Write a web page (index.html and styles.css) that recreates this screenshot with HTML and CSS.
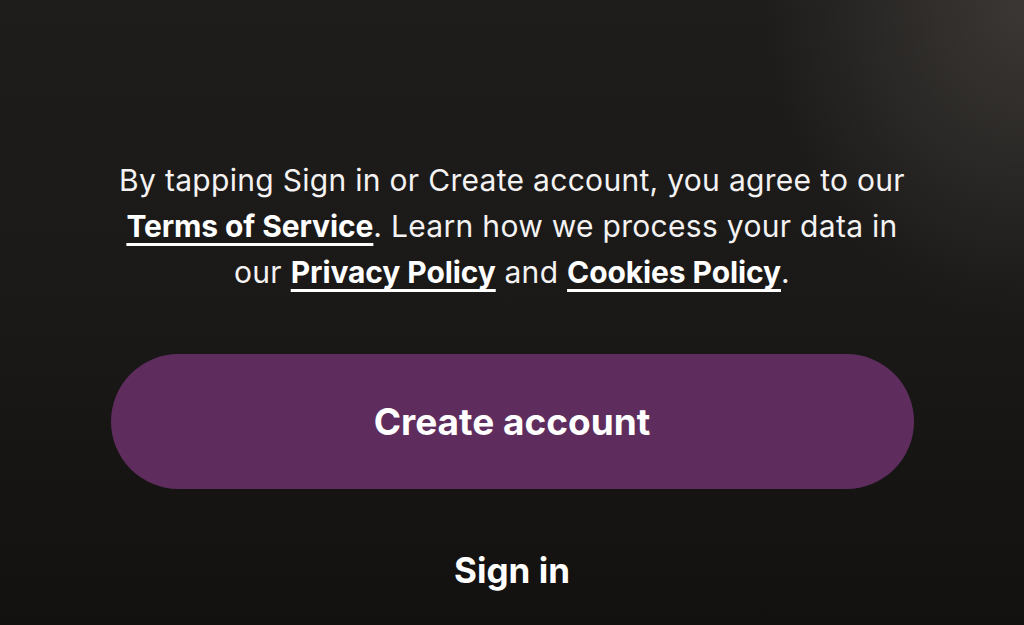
FILE: index.html
```html
<!DOCTYPE html>
<html lang="en">
<head>
  <meta charset="UTF-8">
  <meta name="viewport" content="width=device-width, initial-scale=1.0">
  <title>Welcome</title>
  <link rel="stylesheet" href="styles.css">
</head>
<body>
  <div class="screen">
    <p class="legal">
      By tapping Sign in or Create account, you agree to our<br>
      <a href="#">Terms of Service</a>. Learn how we process your data in<br>
      our <a href="#">Privacy Policy</a> and <a href="#">Cookies Policy</a>.
    </p>
    <button class="btn_create">Create account</button>
    <button class="btn_signin">Sign in</button>
  </div>
</body>
</html>
```

FILE: styles.css
```css
*{
  margin: 0;
  padding: 0;
  box-sizing: border-box;
}

html, body{
  height: 100%;
}

body{
  background: radial-gradient(ellipse 260px 320px at 100% 0%, #3a3734 0%, rgba(58,55,52,0) 100%),
              linear-gradient(180deg, #1f1d1c 0%, #1a1918 50%, #121110 100%);
  color: #fff;
  font-family: "Inter", "Liberation Sans", sans-serif;
  overflow: hidden;
}

.screen{
  display: flex;
  flex-direction: column;
  align-items: center;
  padding-top: 157px;
}

.legal{
  width: 900px;
  text-align: center;
  font-size: 30px;
  line-height: 46px;
  color: #f4f2f2;
  letter-spacing: 0.3px;
  white-space: nowrap;
}

.legal a{
  color: #fff;
  font-weight: 700;
  letter-spacing: -0.1px;
  text-decoration: underline;
  text-decoration-thickness: 3px;
  text-underline-offset: 6px;
}

.btn_create{
  margin-top: 59px;
  width: 803px;
  height: 135px;
  border: none;
  border-radius: 68px;
  background-color: #5e2d5e;
  color: #fff;
  font-family: inherit;
  font-size: 37px;
  font-weight: 700;
  cursor: pointer;
}

.btn_signin{
  margin-top: 60px;
  background: none;
  border: none;
  color: #fff;
  font-family: inherit;
  font-size: 35px;
  font-weight: 700;
  cursor: pointer;
}
```
